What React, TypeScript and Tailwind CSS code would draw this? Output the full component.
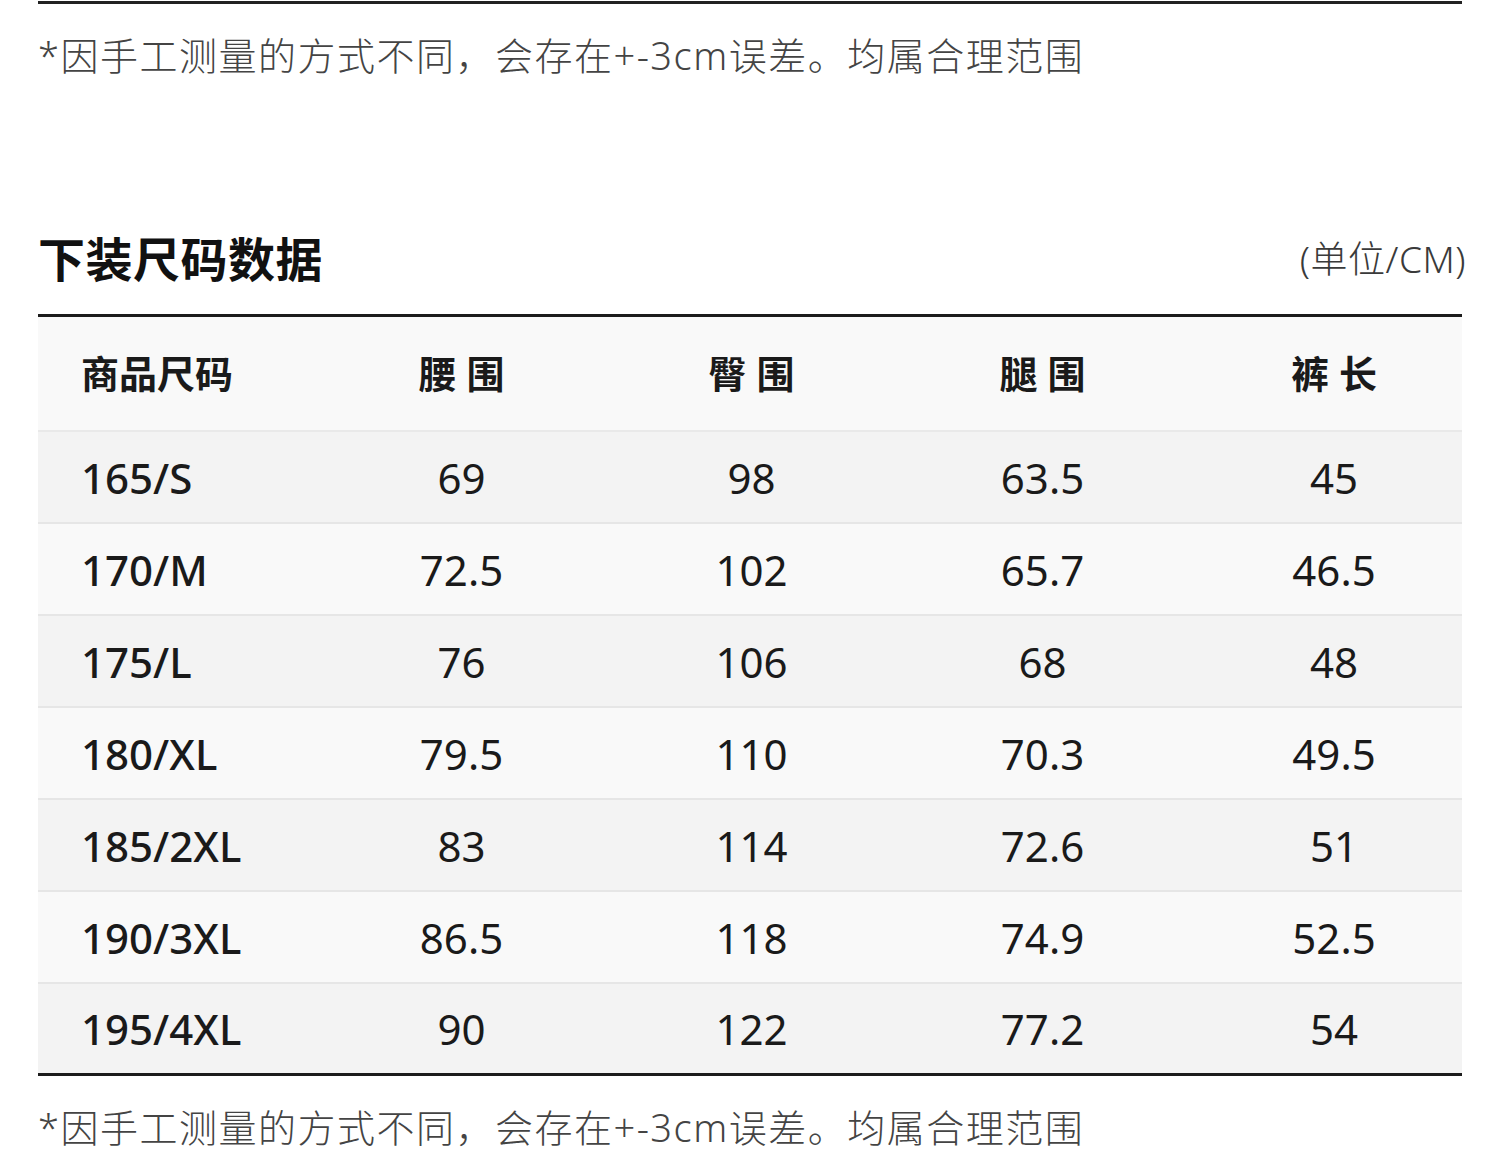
const ROWS = [
  ["165/S", "69", "98", "63.5", "45"],
  ["170/M", "72.5", "102", "65.7", "46.5"],
  ["175/L", "76", "106", "68", "48"],
  ["180/XL", "79.5", "110", "70.3", "49.5"],
  ["185/2XL", "83", "114", "72.6", "51"],
  ["190/3XL", "86.5", "118", "74.9", "52.5"],
  ["195/4XL", "90", "122", "77.2", "54"],
];

const HEADERS = ["商品尺码", "腰 围", "臀 围", "腿 围", "裤 长"];

const NOTE = "*因手工测量的方式不同，会存在+-3cm误差。均属合理范围";

function Note() {
  return (
    <p className="h-[49px] text-[38px] leading-[49px] tracking-[1.5px] font-light text-[#444] whitespace-nowrap">
      {NOTE}
    </p>
  );
}

export default function App() {
  return (
    <div
      className="w-[1500px] h-[1157px] bg-white px-[38px] overflow-hidden"
      style={{ fontFamily: '"Noto Sans", "Noto Sans CJK SC", sans-serif' }}
    >
      <div className="mt-px border-t-[3px] border-[#222]" />
      <div className="mt-[27px]">
        <Note />
      </div>

      {/* Title */}
      <div className="mt-[151px] h-[56px] flex items-center justify-between">
        <h2 className="text-[47px] font-bold text-[#111] leading-[56px] tracking-[0.5px]">下装尺码数据</h2>
        <span className="text-[37px] text-[#3a3a3a] font-light tracking-[0.5px] mr-[-4px]">(单位/CM)</span>
      </div>

      {/* Table */}
      <div className="mt-[27px] border-t-[3px] border-b-[3px] border-[#1c1c1c]">
        <div className="grid grid-cols-[278px_291px_289px_293px_1fr] items-center h-[115px] bg-[#f9f9f9] border-b-2 border-[#e9e9e9]">
          {HEADERS.map((h, i) => (
            <div
              key={h}
              className={`text-[38px] font-bold text-[#1a1a1a] ${
                i === 0 ? "pl-[43px]" : i === 4 ? "pl-[17px] text-center" : "text-center"
              }`}
            >
              {h}
            </div>
          ))}
        </div>
        {ROWS.map((row, r) => (
          <div
            key={row[0]}
            className={`grid grid-cols-[278px_291px_289px_293px_1fr] items-center ${
              r % 2 === 0 ? "bg-[#f3f3f3]" : "bg-[#f9f9f9]"
            } ${r < ROWS.length - 1 ? "h-[92px] border-b-2 border-[#e6e6e6]" : "h-[89px]"}`}
          >
            {row.map((cell, i) => (
              <div
                key={i}
                className={`text-[42px] text-[#1a1a1a] ${
                  i === 0
                    ? "pl-[43px] font-medium"
                    : i === 4
                    ? "pl-[17px] text-center"
                    : "text-center"
                }`}
              >
                {cell}
              </div>
            ))}
          </div>
        ))}
      </div>

      <div className="mt-[27px]">
        <Note />
      </div>
    </div>
  );
}
